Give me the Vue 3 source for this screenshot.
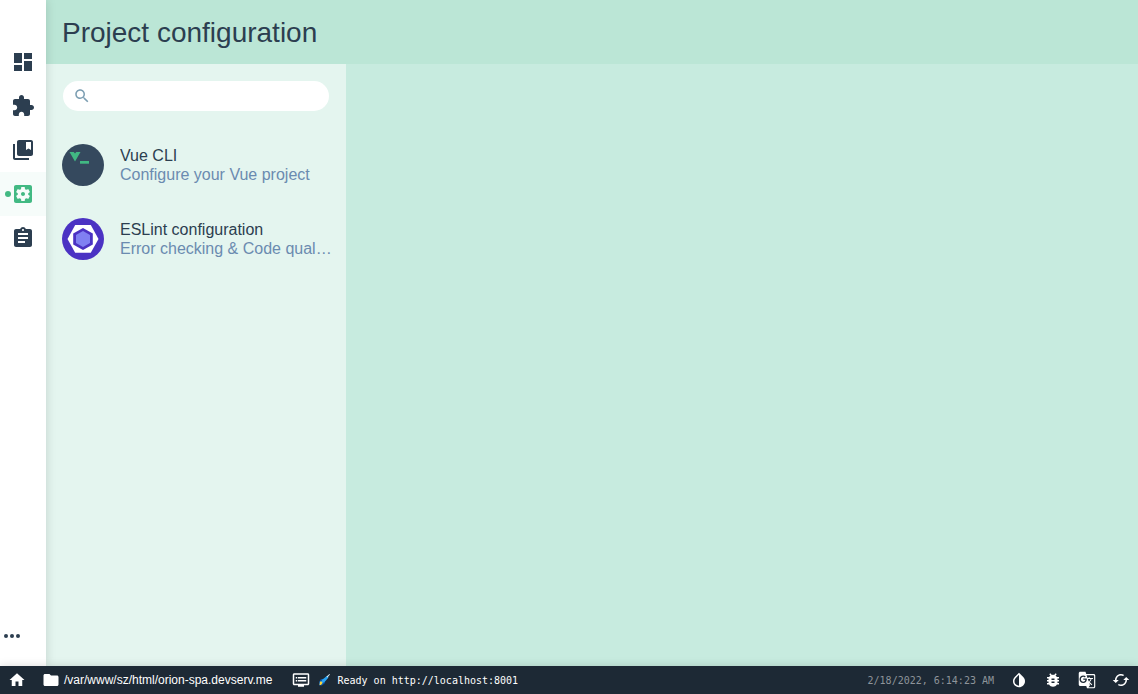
<script setup>
import { ref } from 'vue'

const search = ref('')

const nav = [
  { label: 'Dashboard', d: 'M3 13h8V3H3v10zm0 8h8v-6H3v6zm10 0h8V11h-8v10zm0-18v6h8V3h-8z' },
  { label: 'Plugins', d: 'M20.500 11H19V7c0-1.100-.900-2-2-2h-4V3.500C13 2.120 11.880 1 10.500 1S8 2.120 8 3.500V5H4c-1.100 0-1.990.900-1.990 2v3.800H3.500c1.490 0 2.700 1.210 2.700 2.700s-1.210 2.700-2.700 2.700H2V20c0 1.100.900 2 2 2h3.800v-1.500c0-1.490 1.210-2.700 2.700-2.700 1.490 0 2.700 1.210 2.700 2.700V22H17c1.100 0 2-.900 2-2v-4h1.500c1.380 0 2.500-1.120 2.500-2.500S21.880 11 20.500 11z' },
  { label: 'Dependencies', d: 'M4 6H2v14c0 1.100.900 2 2 2h14v-2H4V6zM20 2H8c-1.100 0-2 .900-2 2v12c0 1.100.900 2 2 2h12c1.100 0 2-.900 2-2V4c0-1.100-.900-2-2-2zm0 10l-2.500-1.500L15 12V4h5v8z' },
  { label: 'Configuration', active: true, d: 'M12 10c-1.100 0-2 .900-2 2s.900 2 2 2 2-.900 2-2-.900-2-2-2zm7-7H5c-1.110 0-2 .900-2 2v14c0 1.100.890 2 2 2h14c1.110 0 2-.900 2-2V5c0-1.100-.890-2-2-2zm-1.750 9c0 .230-.020.460-.050.680l1.480 1.160c.130.110.170.300.080.450l-1.400 2.420c-.090.150-.270.210-.430.150l-1.740-.700c-.360.280-.760.510-1.180.690l-.260 1.850c-.030.170-.180.300-.350.300h-2.800c-.170 0-.320-.130-.350-.290l-.260-1.850c-.430-.180-.820-.410-1.180-.690l-1.740.700c-.160.060-.340 0-.430-.150l-1.400-2.420c-.090-.150-.050-.340.080-.450l1.480-1.160c-.030-.230-.050-.460-.050-.690 0-.230.020-.460.050-.680l-1.480-1.160c-.130-.110-.170-.300-.080-.450l1.400-2.420c.090-.150.270-.210.430-.150l1.740.700c.360-.280.760-.510 1.180-.690l.260-1.850c.030-.170.180-.300.350-.300h2.800c.170 0 .320.130.350.290l.260 1.850c.430.180.820.410 1.180.690l1.740-.700c.160-.060.340 0 .430.150l1.400 2.420c.090.150.050.340-.080.450l-1.480 1.160c.030.230.050.460.050.690z' },
  { label: 'Tasks', d: 'M19 3h-4.180C14.400 1.840 13.300 1 12 1c-1.300 0-2.400.840-2.820 2H5c-1.100 0-2 .900-2 2v14c0 1.100.900 2 2 2h14c1.100 0 2-.900 2-2V5c0-1.100-.900-2-2-2zm-7 0c.550 0 1 .450 1 1s-.450 1-1 1-1-.450-1-1 .450-1 1-1zm2 14H7v-2h7v2zm3-4H7v-2h10v2zm0-4H7V7h10v2z' },
]

const actions = [
  { label: 'Toggle dark mode', d: 'M17.660 7.930L12 2.270 6.340 7.930c-3.120 3.120-3.120 8.190 0 11.310C7.900 20.800 9.950 21.580 12 21.580c2.050 0 4.100-.780 5.660-2.340 3.120-3.120 3.120-8.190 0-11.310zM12 19.590c-1.600 0-3.110-.620-4.240-1.760C6.620 16.690 6 15.190 6 13.590s.620-3.110 1.760-4.240L12 5.100v14.490z' },
  { label: 'Report a bug', d: 'M20 8h-2.810c-.450-.780-1.070-1.450-1.820-1.960L17 4.410 15.590 3l-2.170 2.170C12.960 5.060 12.490 5 12 5c-.490 0-.960.060-1.410.170L8.410 3 7 4.410l1.620 1.630C7.880 6.550 7.260 7.220 6.810 8H4v2h2.090c-.050.330-.090.660-.090 1v1H4v2h2v1c0 .340.040.670.090 1H4v2h2.810c1.040 1.790 2.970 3 5.190 3s4.150-1.210 5.190-3H20v-2h-2.090c.050-.330.090-.660.090-1v-1h2v-2h-2v-1c0-.340-.040-.670-.090-1H20V8zm-6 8h-4v-2h4v2zm0-4h-4v-2h4v2z' },
  { label: 'Translate', d: 'M21 4H11l-1-3H3c-1.100 0-2 .900-2 2v15c0 1.100.900 2 2 2h8l1 3h9c1.100 0 2-.900 2-2V6c0-1.100-.900-2-2-2zM7 16c-2.760 0-5-2.240-5-5s2.240-5 5-5c1.350 0 2.480.500 3.350 1.300L9.030 8.570c-.380-.360-1.040-.780-2.030-.780-1.740 0-3.150 1.440-3.150 3.210S5.260 14.210 7 14.210c2.010 0 2.840-1.440 2.920-2.410H7v-1.710h4.680c.070.310.120.610.120 1.020C11.800 13.970 9.890 16 7 16zm6.170-5.420h3.700c-.430 1.250-1.110 2.430-2.050 3.470-.310-.350-.600-.720-.860-1.100l-.790-2.370zm8.330 9.920c0 .550-.450 1-1 1H14l2-2.500-1.040-3.100 3.100 3.100.920-.920-3.300-3.250.020-.020c1.130-1.250 1.930-2.690 2.400-4.220H20v-1.300h-4.530V8h-1.290v1.290h-1.440L11.460 5.500h9.040c.550 0 1 .450 1 1v14z' },
  { label: 'Refresh', d: 'M19 8l-4 4h3c0 3.310-2.690 6-6 6-1.010 0-1.970-.250-2.800-.700l-1.460 1.460C8.970 19.540 10.430 20 12 20c4.420 0 8-3.580 8-8h3l-4-4zM6 12c0-3.310 2.690-6 6-6 1.010 0 1.970.250 2.800.700l1.460-1.460C15.030 4.460 13.570 4 12 4c-4.420 0-8 3.580-8 8H1l4 4 4-4H6z' },
]
</script>

<template>
  <div class="app">
    <div class="body">
      <nav class="side">
        <div class="links">
          <a v-for="n in nav" :key="n.label" href="#" class="link" :class="{ active: n.active }" :aria-label="n.label">
            <svg class="icon" viewBox="0 0 24 24"><path :d="n.d" /></svg>
          </a>
        </div>
        <button class="more" aria-label="More">
          <svg class="icon" viewBox="0 0 24 24"><circle cx="6" cy="12" r="2" /><circle cx="12" cy="12" r="2" /><circle cx="18" cy="12" r="2" /></svg>
        </button>
      </nav>
      <main class="main">
        <header class="header"><h1>Project configuration</h1></header>
        <div class="content">
          <section class="list">
            <label class="search">
              <svg viewBox="0 0 24 24"><path d="M15.500 14h-.790l-.280-.270C15.410 12.590 16 11.110 16 9.500 16 5.910 13.090 3 9.500 3S3 5.910 3 9.500 5.910 16 9.500 16c1.610 0 3.090-.590 4.230-1.570l.270.280v.790l5 4.990L20.490 19l-4.990-5zm-6 0C7.010 14 5 11.990 5 9.500S7.010 5 9.500 5 14 7.010 14 9.500 11.990 14 9.500 14z" /></svg>
              <input v-model="search" type="text" aria-label="Search configuration">
            </label>
            <a href="#" class="item">
              <svg class="logo" viewBox="0 0 42 42">
                <circle cx="21" cy="21" r="21" fill="#35495e" />
                <path d="M7.500 8h4.200L13 9.500 14.300 8h4.200L13 17.500z" fill="#41b883" />
                <path d="M18 17h9v2.700h-9z" fill="#41b883" />
              </svg>
              <span class="info"><span class="name">Vue CLI</span><span class="desc">Configure your Vue project</span></span>
            </a>
            <a href="#" class="item">
              <svg class="logo" viewBox="0 0 42 42">
                <circle cx="21" cy="21" r="21" fill="#4b32c3" />
                <path d="M13.200 7h15.600L36.500 21l-7.700 13.800H13.200L5.500 21z" fill="#fff" />
                <path d="M21 10l9.800 5.500v11L21 32l-9.800-5.500v-11z" fill="#4b32c3" />
                <path d="M21 13l7 4v8l-7 4-7-4v-8z" fill="#8080f2" />
              </svg>
              <span class="info"><span class="name">ESLint configuration</span><span class="desc">Error checking &amp; Code qual…</span></span>
            </a>
          </section>
          <section class="detail"></section>
        </div>
      </main>
    </div>
    <footer class="status">
      <button class="cell" aria-label="Home"><svg viewBox="0 0 24 24"><path d="M10 20v-6h4v6h5v-8h3L12 3 2 12h3v8z" /></svg></button>
      <button class="cell path"><svg viewBox="0 0 24 24"><path d="M10 4H4c-1.100 0-1.990.900-1.990 2L2 18c0 1.100.900 2 2 2h16c1.100 0 2-.900 2-2V8c0-1.100-.900-2-2-2h-8l-2-2z" /></svg><span>/var/www/sz/html/orion-spa.devserv.me</span></button>
      <button class="cell log">
        <svg viewBox="0 0 24 24"><path d="M21 3H3c-1.100 0-2 .900-2 2v12c0 1.100.900 2 2 2h5v2h8v-2h5c1.100 0 2-.900 2-2V5c0-1.100-.900-2-2-2zm0 14H3V5h18v12zm-2-9H8v2h11V8zm0 4H8v2h11v-2zM7 8H5v2h2V8zm0 4H5v2h2v-2z" /></svg>
        <svg class="rocket" viewBox="0 0 12 12">
          <path d="M1 8l2-3h3l3-3 1 1-3 4v2l-3 2.500H1z" fill="#0b56a8" />
          <path d="M3 8l1.500-2.500L9 2l1.500 1.500L7 7.500 4 9.500z" fill="#2aa5f5" />
          <path d="M8.500 2.500L11.500 0 12 .5l-2.500 3z" fill="#d7edf5" />
          <path d="M2 7.500h1.500l1 1.500L3 11H1.500z" fill="#ffd43b" />
        </svg>
        <span class="mono">Ready on http://localhost:8001</span>
      </button>
      <span class="mono date">2/18/2022, 6:14:23 AM</span>
      <button v-for="a in actions" :key="a.label" class="cell" :aria-label="a.label"><svg viewBox="0 0 24 24"><path :d="a.d" /></svg></button>
    </footer>
  </div>
</template>

<style>
body { margin: 0; }
</style>

<style scoped>
.app {
  display: flex;
  flex-direction: column;
  height: 100vh;
  font-family: "Liberation Sans", Arial, sans-serif;
  font-size: 16px;
  color: #2c3e50;
  overflow: hidden;
}
svg { display: block; flex: none; fill: currentColor; }
button { border: 0; background: none; padding: 0; font: inherit; color: inherit; cursor: pointer; }
a { color: inherit; text-decoration: none; }
.body { flex: 1; display: flex; min-height: 0; }
.side {
  width: 46px;
  flex: none;
  display: flex;
  flex-direction: column;
  justify-content: space-between;
  padding: 40px 0 18px;
  box-sizing: border-box;
  background: #fff;
  box-shadow: 0 0 10px rgba(0, 0, 0, .15);
  position: relative;
  z-index: 1;
}
.icon { width: 24px; height: 24px; }
.link { position: relative; display: flex; align-items: center; justify-content: center; height: 44px; }
.link.active { color: #42b983; background: #f6fcfa; }
.link.active::before {
  content: "";
  position: absolute;
  left: 5px;
  top: 19px;
  width: 6px;
  height: 6px;
  border-radius: 50%;
  background: #42b983;
}
.more { align-self: flex-start; }
.main { flex: 1; min-width: 0; display: flex; flex-direction: column; }
.header { height: 64px; box-sizing: border-box; display: flex; align-items: center; padding: 2px 16px 0; background: #bbe6d6; }
h1 { margin: 0; font-size: 28px; line-height: 32px; font-weight: 400; }
.content { flex: 1; display: flex; min-height: 0; }
.list { width: 300px; flex: none; box-sizing: border-box; background: #e4f5ef; }
.search {
  display: flex;
  align-items: center;
  gap: 6px;
  height: 30px;
  margin: 17px;
  padding: 0 10px;
  box-sizing: border-box;
  border-radius: 15px;
  background: #fff;
  color: #7c9eb2;
}
.search svg { width: 18px; height: 18px; }
.search input { flex: 1; min-width: 0; border: 0; outline: 0; padding: 0; background: none; font: inherit; color: #2c3e50; }
.item { display: flex; align-items: center; gap: 16px; height: 74px; padding: 0 12px 0 16px; }
.logo { width: 42px; height: 42px; }
.info { flex: 1; min-width: 0; line-height: 19px; }
.name, .desc { display: block; white-space: nowrap; overflow: hidden; text-overflow: ellipsis; }
.desc { color: #6b8bb0; }
.detail { flex: 1; background: #c7ebdf; }
.status {
  height: 28px;
  flex: none;
  display: flex;
  align-items: center;
  background: #1d2935;
  color: #fff;
  font-size: 12px;
  box-shadow: 0 0 10px rgba(0, 0, 0, .15);
  position: relative;
  z-index: 2;
}
.cell { display: flex; align-items: center; height: 28px; padding: 0 8px; white-space: nowrap; }
.cell svg { width: 18px; height: 18px; }
.path { gap: 4px; padding-right: 11px; }
.log { gap: 8px; }
.cell .rocket { width: 12px; height: 12px; }
.mono { font-family: "DejaVu Sans Mono", monospace; font-size: 10px; }
.date { margin-left: auto; padding-right: 8px; color: #8e949a; }
</style>
